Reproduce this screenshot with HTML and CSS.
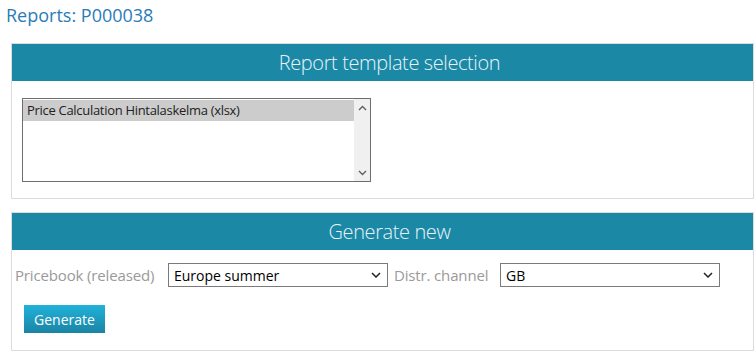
FILE: index.html
```html
<!DOCTYPE html>
<html lang="en">
<head>
  <meta charset="UTF-8">
  <title>Reports: P000038</title>
  <link rel="stylesheet" href="styles.css">
</head>
<body>
  <h1 class="page-title">Reports: P000038</h1>

  <div class="panel">
    <div class="panel-header">Report template selection</div>
    <div class="panel-body templates">
      <div class="listbox">
        <div class="listbox-items">
          <div class="listbox-item selected">Price Calculation Hintalaskelma (xlsx)</div>
        </div>
        <div class="listbox-scroll">
          <svg width="9" height="6" viewBox="0 0 9 6"><path d="M1 5 L4.5 1.5 L8 5" fill="none" stroke="#606060" stroke-width="1.4"/></svg>
          <svg width="9" height="6" viewBox="0 0 9 6"><path d="M1 1 L4.5 4.5 L8 1" fill="none" stroke="#606060" stroke-width="1.4"/></svg>
        </div>
      </div>
    </div>
  </div>

  <div class="panel">
    <div class="panel-header">Generate new</div>
    <div class="panel-body generate">
      <div class="field-row">
        <label class="field-label pricebook">Pricebook (released)</label>
        <span class="select-wrap">
          <select class="field-select"><option>Europe summer</option></select>
          <svg class="chevron" width="10" height="6" viewBox="0 0 10 6"><path d="M1 1 L5 5 L9 1" fill="none" stroke="#222" stroke-width="1.5"/></svg>
        </span>
        <label class="field-label channel">Distr. channel</label>
        <span class="select-wrap">
          <select class="field-select"><option>GB</option></select>
          <svg class="chevron" width="10" height="6" viewBox="0 0 10 6"><path d="M1 1 L5 5 L9 1" fill="none" stroke="#222" stroke-width="1.5"/></svg>
        </span>
      </div>
      <button class="btn-generate">Generate</button>
    </div>
  </div>
</body>
</html>
```

FILE: styles.css
```css
* {
  box-sizing: border-box;
}
body {
  margin: 0;
  font-family: 'Open Sans', 'Noto Sans', sans-serif;
  background: #fff;
  color: #222;
}
.page-title {
  margin: 0;
  padding: 3px 0 0 6px;
  height: 43px;
  font-size: 18px;
  font-weight: normal;
  color: #2a7cb8;
}
.panel {
  margin: 0 2px 13px 11px;
  border: 1px solid #dcdcdc;
}
.panel-header {
  height: 37px;
  background: #1b88a6;
  color: #e8f4f8;
  font-size: 20px;
  font-weight: 300;
  text-align: center;
  line-height: 37px;
  padding-left: 14px;
  letter-spacing: -0.4px;
}
.templates {
  padding: 17px 0 16px 10px;
}
.listbox {
  display: flex;
  width: 349px;
  height: 84px;
  border: 1px solid #6e6e6e;
}
.listbox-items {
  flex: 1;
  padding-top: 1px;
}
.listbox-item {
  height: 21px;
  line-height: 21px;
  padding-left: 4px;
  font-size: 13px;
  color: #222;
  letter-spacing: -0.3px;
}
.listbox-item.selected {
  background: #cccccc;
}
.listbox-scroll {
  width: 16px;
  background: #f0f0f0;
  display: flex;
  flex-direction: column;
  justify-content: space-between;
  align-items: center;
  padding: 6px 0 5px;
}
.generate {
  padding: 13px 0 17px 3px;
}
.field-row {
  display: flex;
  align-items: center;
  height: 24px;
}
.field-label {
  color: #9a9a9a;
  font-size: 15px;
  letter-spacing: -0.15px;
}
.pricebook {
  width: 153px;
}
.channel {
  width: 112px;
  padding-left: 6px;
}
.select-wrap {
  position: relative;
  display: inline-block;
  width: 220px;
  height: 24px;
}
.field-select {
  appearance: none;
  -webkit-appearance: none;
  width: 100%;
  height: 24px;
  border: 1px solid #7a7a7a;
  border-radius: 0;
  background: #fff;
  padding: 0 0 0 5px;
  font-family: inherit;
  font-size: 14px;
  color: #000;
}
.chevron {
  position: absolute;
  right: 7px;
  top: 9px;
  pointer-events: none;
}
.btn-generate {
  display: block;
  margin: 18px 0 0 9px;
  width: 81px;
  height: 28px;
  border: none;
  background: linear-gradient(#21b2da, #1a84a4);
  color: #fff;
  font-family: inherit;
  font-size: 14px;
  padding: 0;
}
```
